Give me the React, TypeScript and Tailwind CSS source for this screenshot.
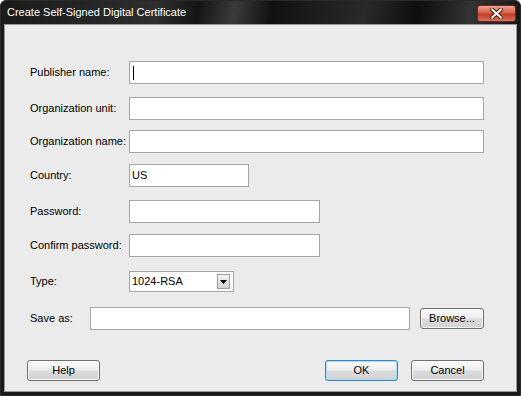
const font = "font-['Tahoma','Liberation_Sans',sans-serif]"

function Field({ width, value, cursor }: { width: string; value?: string; cursor?: boolean }) {
  return (
    <div className={`${width} h-[23px] border border-[#a5a5a5] bg-white flex items-center px-[2px] text-[11px] text-black`}>
      {cursor && <div className="w-px h-[14px] bg-black ml-px" />}
      {value}
    </div>
  )
}

function Button({ label, isDefault, width = 'w-[73px]' }: { label: string; isDefault?: boolean; width?: string }) {
  return (
    <div
      className={`${width} h-[21px] rounded-[3px] border flex items-center justify-center text-[11px] text-black bg-[linear-gradient(to_bottom,#fafafa_0%,#eeeeee_45%,#dcdcdc_55%,#d2d2d2_100%)] ${
        isDefault ? 'border-[#3c85b8] shadow-[inset_0_0_0_1px_#a8dcf6]' : 'border-[#707070] shadow-[inset_0_0_0_1px_#f8f8f8]'
      }`}
    >
      {label}
    </div>
  )
}

function Row({ label, children, top }: { label: string; children: React.ReactNode; top: string }) {
  return (
    <div className={`flex items-center ${top}`}>
      <div className="w-[99px] text-[11px] text-black">{label}</div>
      {children}
    </div>
  )
}

export default function App() {
  return (
    <div className={`w-[521px] h-[396px] bg-white ${font}`}>
      <div className="w-[521px] h-[396px] flex flex-col rounded-t-[6px] overflow-hidden bg-[#1b1b1b] border border-[#2a2a2a]">
        {/* title bar */}
        <div className="h-[23px] shrink-0 flex items-center justify-between pl-[6px] pr-[4px] bg-[linear-gradient(100deg,#1a1a1a_0%,#2e2e2e_30%,#151515_38%,#3a3a3a_45%,#111_52%,#2a2a2a_70%,#0e0e0e_80%,#333_90%,#151515_100%)]">
          <span className="text-white text-[11px] leading-none">Create Self-Signed Digital Certificate</span>
          <div className="w-[39px] h-[17px] mt-px rounded-[3px] border border-[#6b2a22] bg-[linear-gradient(to_bottom,#f0a090_0%,#d8624c_45%,#c2402a_55%,#d6705a_100%)] flex items-center justify-center">
            <svg width="13" height="11" viewBox="0 0 13 11">
              <path d="M2 1.5 L11 9.5 M11 1.5 L2 9.5" stroke="#4a1810" strokeWidth="4" strokeLinecap="square" />
              <path d="M2 1.5 L11 9.5 M11 1.5 L2 9.5" stroke="#ffffff" strokeWidth="2" strokeLinecap="square" />
            </svg>
          </div>
        </div>

        {/* body */}
        <div className="flex-1 mx-[3px] mb-[3px] bg-[#ebebeb] border border-[#9a9a9a] flex flex-col pl-[25px] pr-[32px]">
          <Row label="Publisher name:" top="mt-[36px]">
            <Field width="w-[356px]" cursor />
          </Row>
          <Row label="Organization unit:" top="mt-[13px]">
            <Field width="w-[356px]" />
          </Row>
          <Row label="Organization name:" top="mt-[10px]">
            <Field width="w-[356px]" />
          </Row>
          <Row label="Country:" top="mt-[11px]">
            <Field width="w-[120px]" value="US" />
          </Row>
          <Row label="Password:" top="mt-[13px]">
            <Field width="w-[191px]" />
          </Row>
          <Row label="Confirm password:" top="mt-[11px]">
            <Field width="w-[191px]" />
          </Row>
          <Row label="Type:" top="mt-[14px]">
            <div className="w-[105px] h-[21px] border border-[#a5a5a5] bg-white flex items-center justify-between pl-[2px] pr-[3px] text-[11px] text-black">
              <span>1024-RSA</span>
              <div className="w-[13px] h-[15px] border border-[#9c9c9c] bg-[linear-gradient(to_bottom,#f4f4f4,#d4d4d4)] flex items-center justify-center">
                <svg width="7" height="4" viewBox="0 0 7 4">
                  <path d="M0 0 L7 0 L3.5 4 Z" fill="#000" />
                </svg>
              </div>
            </div>
          </Row>
          <div className="flex items-center mt-[15px]">
            <div className="w-[60px] text-[11px] text-black">Save as:</div>
            <Field width="w-[321px]" />
            <div className="ml-[10px]">
              <Button label="Browse..." width="w-[64px]" />
            </div>
          </div>
          <div className="flex items-center justify-between mt-[30px] -ml-[3px]">
            <Button label="Help" />
            <div className="flex gap-[13px]">
              <Button label="OK" isDefault />
              <Button label="Cancel" />
            </div>
          </div>
        </div>
      </div>
    </div>
  )
}
